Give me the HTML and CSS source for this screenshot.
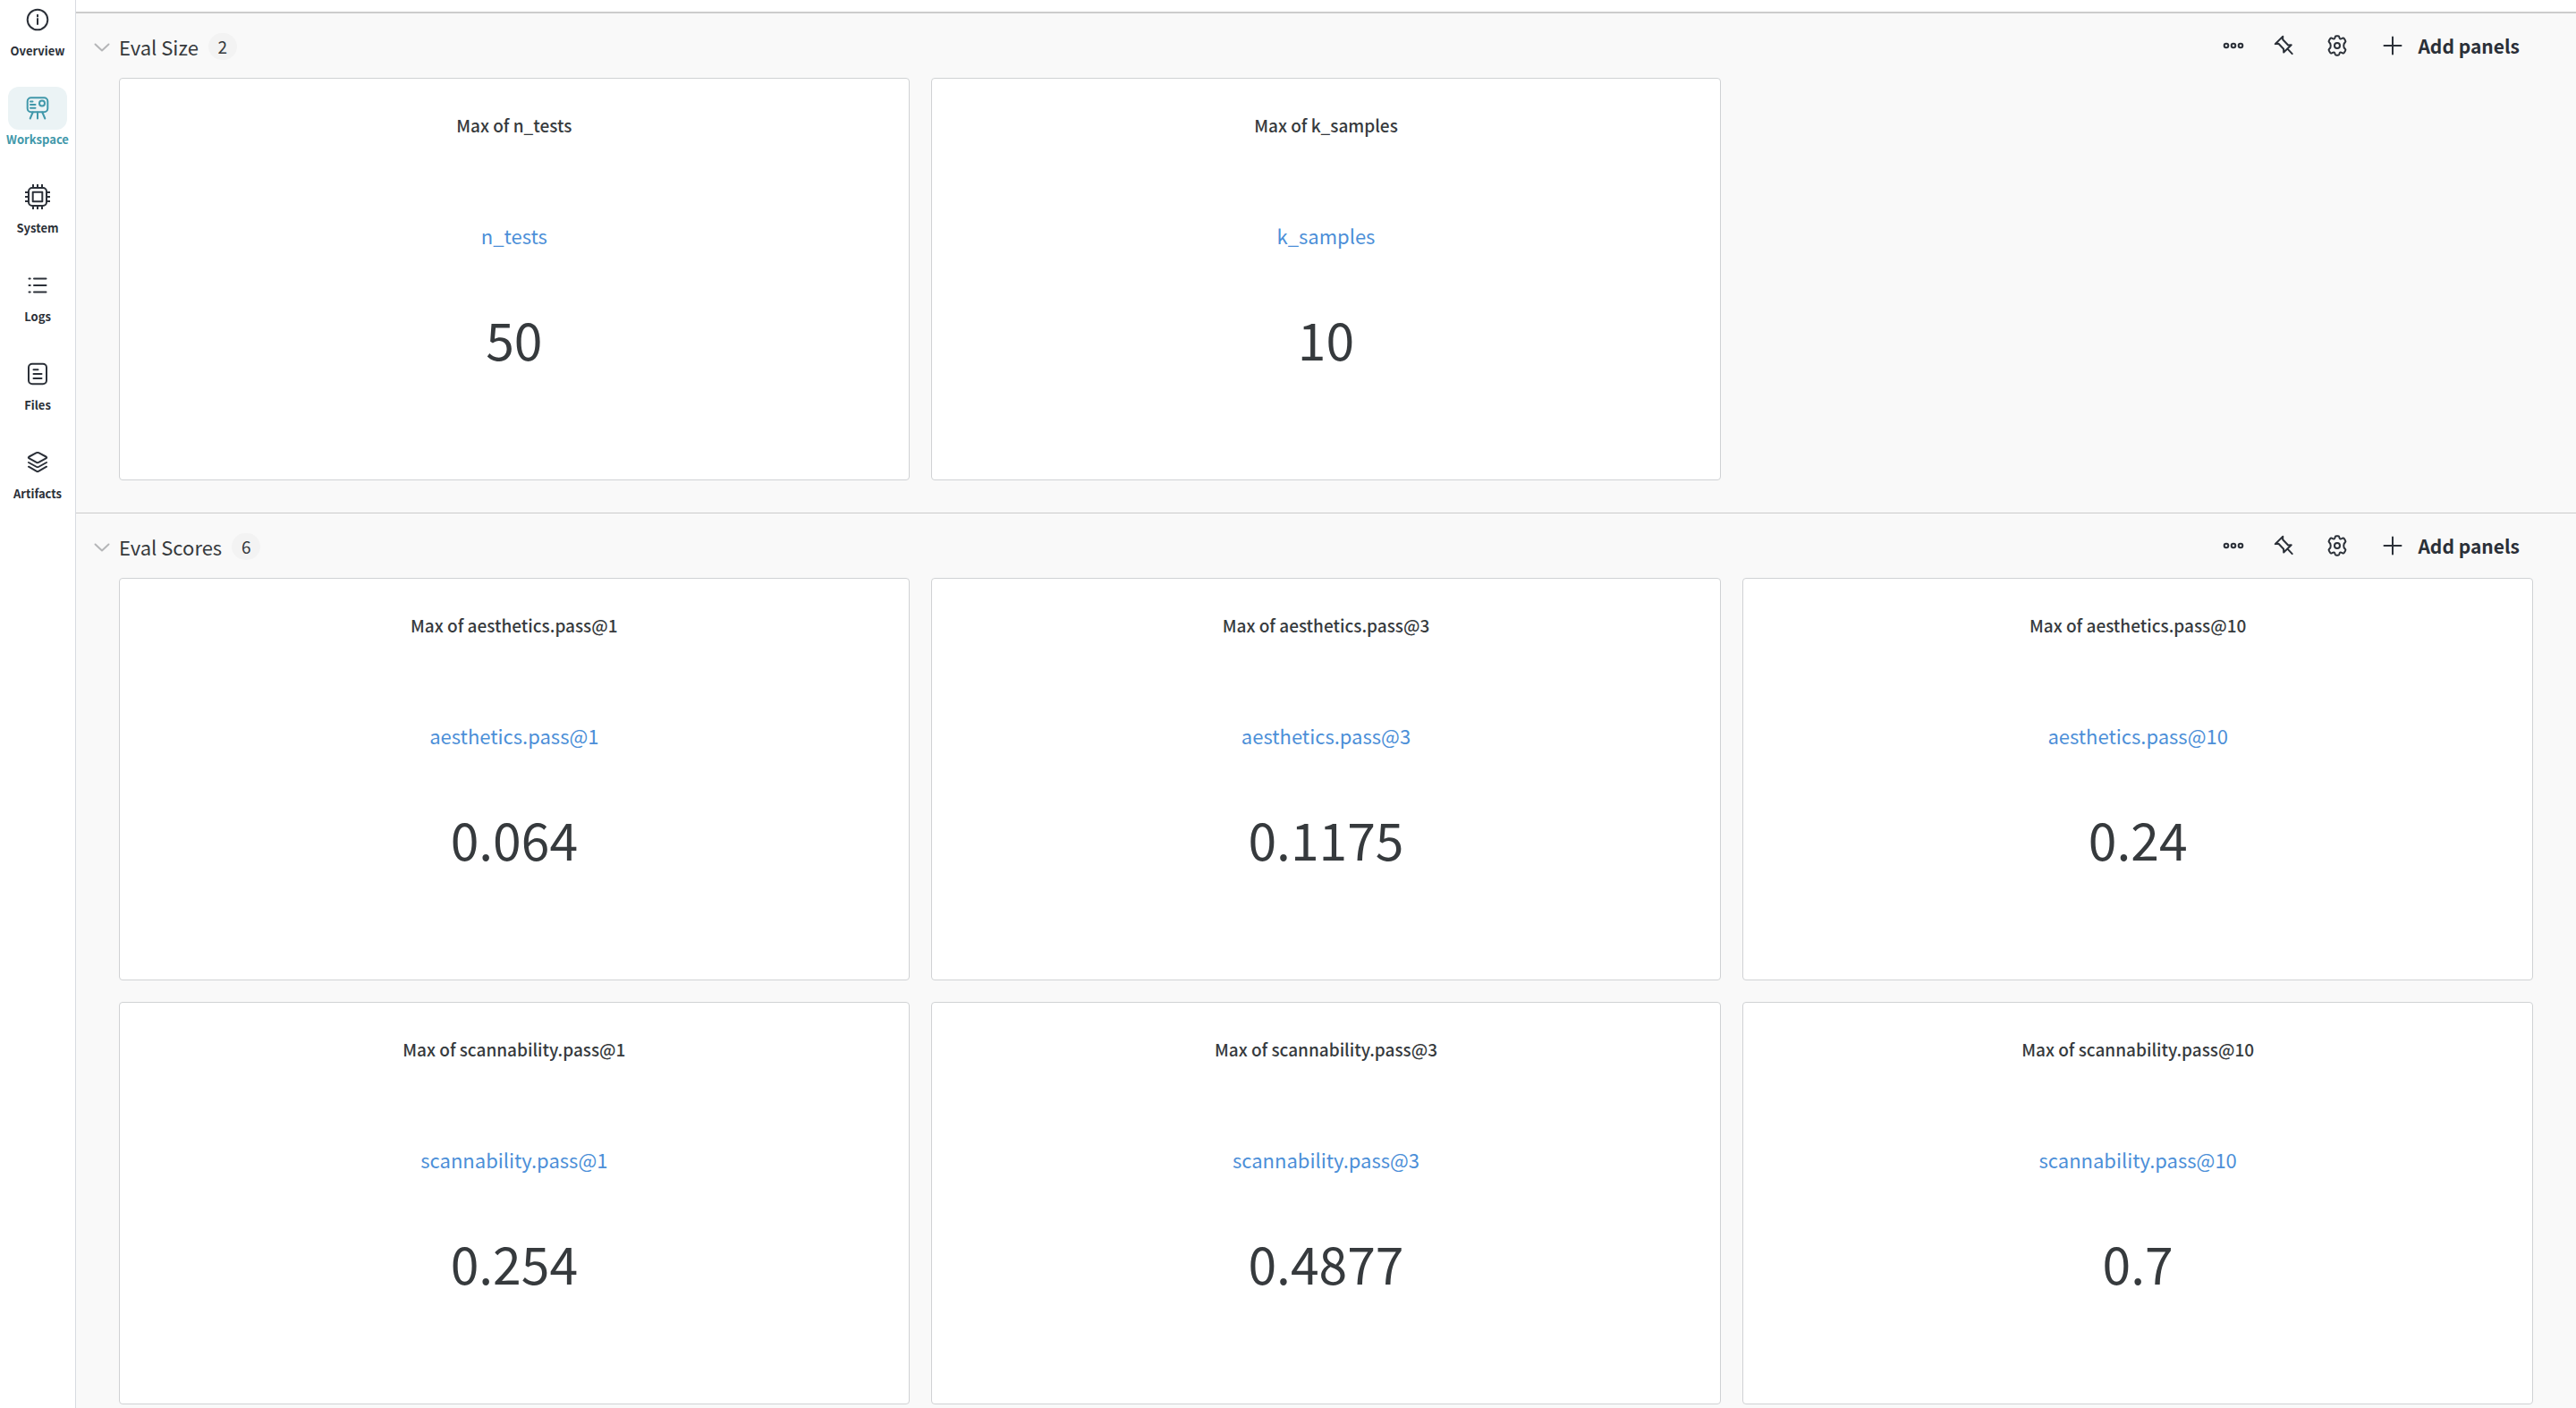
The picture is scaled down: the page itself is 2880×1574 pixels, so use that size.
FILE: index.html
```
<!DOCTYPE html>
<html lang="en">
<head>
<meta charset="utf-8">
<title>Workspace</title>
<link rel="stylesheet" href="styles.css">
</head>
<body>
<svg class="sprite" aria-hidden="true">
  <symbol id="chevron" viewBox="0 0 20 12"><path d="M2.500 2.500l7.500 7 7.500-7"/></symbol>
  <symbol id="dots" viewBox="0 0 24 24"><circle cx="4" cy="12" r="2.300"/><circle cx="12" cy="12" r="2.300"/><circle cx="20" cy="12" r="2.300"/></symbol>
  <symbol id="pin" viewBox="0 0 24 24"><path d="M11.300 1.800l-8.600 8.300M11.200 2v3.200l6 6.300 3.500-.2-8.500 8.200-.1-3.700-5.700-6.100-3.400.2M16.500 15.600l5.200 5.500"/></symbol>
  <symbol id="gear" viewBox="0 0 24 24"><circle cx="12" cy="12" r="3"/><path d="M9.600 2.600q.2-1.300 1.400-1.300h2q1.200 0 1.400 1.300c.2 1.800 1.200 2.300 2.700 1.600l.9-.5q1.200-.5 1.900.6l1.300 2.200q.6 1.100-.4 1.900c-1.900 1.500-2.200 5.600 0 7.200q1 .8.400 1.900l-1.300 2.200q-.7 1.100-1.900.6l-.9-.5c-1.500-.7-2.500-.2-2.700 1.600q-.2 1.300-1.400 1.300h-2q-1.200 0-1.400-1.300c-.2-1.800-1.200-2.300-2.700-1.600l-.9.5q-1.200.5-1.900-.6l-1.300-2.200q-.6-1.100.4-1.900c2.200-1.600 1.900-5.700 0-7.200q-1-.8-.4-1.900l1.300-2.200q.7-1.100 1.900-.6l.9.500c1.500.7 2.500.2 2.700-1.600z"/></symbol>
  <symbol id="plus" viewBox="0 0 24 24"><path d="M12 2.500v19M2.500 12h19"/></symbol>
</svg>

<div class="app">
  <nav class="sidebar" aria-label="Run">
    <a class="nav-item" href="#overview">
      <span class="nav-icon"><svg viewBox="0 0 28 28"><circle cx="14" cy="14" r="11.300"/><path d="M14 13v6M14 8.700v1.800"/></svg></span>Overview</a>
    <a class="nav-item active" href="#workspace" aria-current="page">
      <span class="nav-icon"><svg viewBox="0 0 28 28"><rect x="2.700" y="2.200" width="22.600" height="16" rx="4"/><circle cx="19" cy="8.500" r="3"/><path d="M6 6.500h2.500M6 10h5.500M6 13.700h5.500M8.700 18.500l-3 7M14 18.500v7M19.300 18.500l3 7"/></svg></span>Workspace</a>
    <a class="nav-item" href="#system">
      <span class="nav-icon"><svg viewBox="0 0 28 28"><rect x="4" y="4" width="20" height="20" rx="4"/><rect x="8.700" y="8.700" width="10.600" height="10.600"/><path d="M9 .5V4M14 .5V4M19 .5V4M9 24v3.500M14 24v3.500M19 24v3.500M.5 9H4M.5 14H4M.5 19H4M24 9h3.500M24 14h3.500M24 19h3.500"/></svg></span>System</a>
    <a class="nav-item" href="#logs">
      <span class="nav-icon"><svg viewBox="0 0 28 28"><path d="M10 6.500h13.500M10 14h13.500M10 21.500h13.500M4.500 6.500h1.200M4.500 14h1.200M4.500 21.500h1.200"/></svg></span>Logs</a>
    <a class="nav-item" href="#files">
      <span class="nav-icon"><svg viewBox="0 0 28 28"><rect x="4" y="2.700" width="20" height="22.600" rx="4"/><path d="M9.500 9.200h5M9.500 14h9M9.500 19h9"/></svg></span>Files</a>
    <a class="nav-item" href="#artifacts">
      <span class="nav-icon"><svg viewBox="0 0 28 28"><path d="M12.800 3.200q1.200-.6 2.400 0l8.200 4.300q1.600.9 0 1.800l-8.200 4.600q-1.200.7-2.400 0L4.600 9.300q-1.600-.9 0-1.800zM4 14l9 5q1 .6 2 0l9-5M4 18.700l9 5.200q1 .6 2 0l9-5.200"/></svg></span>Artifacts</a>
  </nav>

  <main class="workspace">
    <section class="section">
      <header class="section-head">
        <button class="section-toggle" type="button" aria-expanded="true"><svg class="chevron"><use href="#chevron"/></svg>Eval Size<span class="count">2</span></button>
        <div class="actions">
          <button class="icon-button more" type="button" aria-label="More"><svg><use href="#dots"/></svg></button>
          <button class="icon-button" type="button" aria-label="Pin"><svg><use href="#pin"/></svg></button>
          <button class="icon-button" type="button" aria-label="Settings"><svg><use href="#gear"/></svg></button>
          <button class="add-button" type="button"><svg><use href="#plus"/></svg>Add panels</button>
        </div>
      </header>
      <div class="panels">
        <article class="panel"><h3 class="panel-title">Max of n_tests</h3><p class="metric">n_tests</p><p class="value">50</p></article>
        <article class="panel"><h3 class="panel-title">Max of k_samples</h3><p class="metric">k_samples</p><p class="value">10</p></article>
      </div>
    </section>
    <section class="section">
      <header class="section-head">
        <button class="section-toggle" type="button" aria-expanded="true"><svg class="chevron"><use href="#chevron"/></svg>Eval Scores<span class="count">6</span></button>
        <div class="actions">
          <button class="icon-button more" type="button" aria-label="More"><svg><use href="#dots"/></svg></button>
          <button class="icon-button" type="button" aria-label="Pin"><svg><use href="#pin"/></svg></button>
          <button class="icon-button" type="button" aria-label="Settings"><svg><use href="#gear"/></svg></button>
          <button class="add-button" type="button"><svg><use href="#plus"/></svg>Add panels</button>
        </div>
      </header>
      <div class="panels">
        <article class="panel"><h3 class="panel-title">Max of aesthetics.pass@1</h3><p class="metric">aesthetics.pass@1</p><p class="value">0.064</p></article>
        <article class="panel"><h3 class="panel-title">Max of aesthetics.pass@3</h3><p class="metric">aesthetics.pass@3</p><p class="value">0.1175</p></article>
        <article class="panel"><h3 class="panel-title">Max of aesthetics.pass@10</h3><p class="metric">aesthetics.pass@10</p><p class="value">0.24</p></article>
        <article class="panel"><h3 class="panel-title">Max of scannability.pass@1</h3><p class="metric">scannability.pass@1</p><p class="value">0.254</p></article>
        <article class="panel"><h3 class="panel-title">Max of scannability.pass@3</h3><p class="metric">scannability.pass@3</p><p class="value">0.4877</p></article>
        <article class="panel"><h3 class="panel-title">Max of scannability.pass@10</h3><p class="metric">scannability.pass@10</p><p class="value">0.7</p></article>
      </div>
    </section>
  </main>
</div>
</body>
</html>
```
FILE: styles.css
```
* {
  box-sizing: border-box;
}

body {
  margin: 0;
  background: #f9f9f9;
  color: #363a3d;
  font-family: "Noto Sans CJK SC", "Noto Sans", sans-serif;
  font-size: 22px;
}

button {
  padding: 0;
  border: 0;
  background: none;
  color: inherit;
  font: inherit;
  cursor: pointer;
}

svg {
  display: block;
  fill: none;
  stroke: currentColor;
  stroke-width: 2;
  stroke-linecap: round;
  stroke-linejoin: round;
}

.sprite {
  display: none;
}

.app {
  display: flex;
  min-height: 100vh;
}

/* Sidebar */
.sidebar {
  flex: none;
  width: 85px;
  border-right: 1px solid #d8dbe0;
  background: #fff;
}

.nav-item {
  display: flex;
  flex-direction: column;
  align-items: center;
  margin-bottom: 29px;
  color: #2b3038;
  font-size: 13px;
  font-weight: 700;
  line-height: 22px;
  text-decoration: none;
}

.nav-item:first-child {
  margin-top: -2px;
}

.nav-icon {
  display: grid;
  place-items: center;
  width: 66px;
  height: 48px;
  border-radius: 12px;
}

.nav-icon svg {
  width: 28px;
  height: 28px;
}

.active {
  color: #4198aa;
}

.active .nav-icon {
  background: #ebf3f5;
}

/* Sections */
.workspace {
  flex: 1;
  min-width: 0;
  border-top: 13px solid #fff;
}

.section {
  padding: 0 48px 36px;
  border-top: 1px solid #ccc;
}

.section:first-child {
  border-top-width: 2px;
}

.section:last-child {
  padding-bottom: 4px;
}

.section-head {
  display: flex;
  align-items: center;
  justify-content: space-between;
  height: 72px;
}

.section-toggle {
  display: flex;
  align-items: center;
  margin-left: -29px;
  padding-top: 2px;
  line-height: 32px;
}

.chevron {
  width: 20px;
  height: 12px;
  margin: 2px 9px 0 0;
  color: #b5b6b8;
}

.count {
  width: 32px;
  margin-left: 11px;
  border-radius: 15px;
  background: #f3f3f3;
  font-size: 19px;
  line-height: 30px;
  text-align: center;
}

.actions {
  display: flex;
  align-items: center;
  color: #2b3038;
}

.icon-button {
  display: grid;
  place-items: center;
  width: 60px;
  height: 48px;
}

.icon-button.more {
  width: 52px;
}

.icon-button svg,
.add-button svg {
  width: 24px;
  height: 24px;
}

.add-button {
  display: flex;
  align-items: center;
  gap: 16px;
  padding: 0 15px 0 20px;
  font-size: 21px;
  font-weight: 700;
  line-height: 48px;
}

/* Panels */
.panels {
  display: grid;
  grid-template-columns: repeat(3, minmax(0, 1fr));
  gap: 24px;
}

.panel {
  height: 450px;
  padding-top: 38px;
  border: 1px solid #d0d2d4;
  border-radius: 4px;
  background: #fff;
  text-align: center;
}

.panel-title,
.metric,
.value {
  margin: 0;
}

.panel-title {
  font-size: 19px;
  font-weight: 500;
  line-height: 28px;
}

.metric {
  margin-top: 93px;
  color: #4c8fd8;
  line-height: 32px;
}

.value {
  margin-top: 59px;
  font-size: 57px;
  line-height: 80px;
}
```
